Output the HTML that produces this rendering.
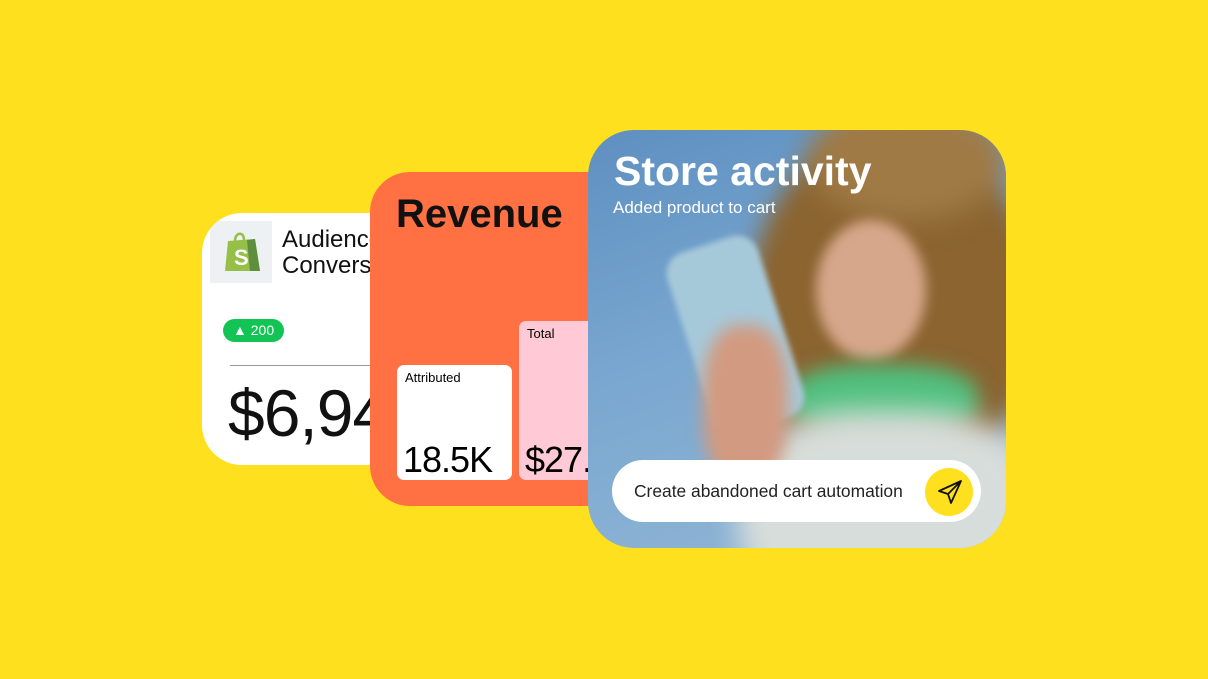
<!DOCTYPE html>
<html><head><style>
*{margin:0;padding:0;box-sizing:border-box}
body{width:1208px;height:679px;background:#FEE01F;position:relative;overflow:hidden;font-family:"Liberation Sans",sans-serif}
.a{position:absolute}
</style></head><body>
<div class="a" style="left:202px;top:213px;width:260px;height:252px;background:#fff;border-radius:40px;overflow:hidden">
  <div class="a" style="left:8px;top:8px;width:62px;height:62px;background:#EEF1F3"></div>
  <svg class="a" style="left:20px;top:16px" width="40" height="44" viewBox="0 0 40 44"><path d="M6 12 L33 10 L38 42 L3 42 Z" fill="#95BF47"/><path d="M25 11 L33 10 L38 42 L28 42 Z" fill="#5E8E3E"/><path d="M13 12 C13 3 22 2 22 11" stroke="#95BF47" stroke-width="2.5" fill="none"/><text x="12" y="36" font-size="22" font-weight="bold" fill="#fff" font-family="Liberation Sans">S</text></svg>
  <div class="a" style="left:80px;top:14px;font-size:24px;line-height:26px;color:#111">Audience<br>Conversions</div>
  <div class="a" style="left:21px;top:106px;width:61px;height:23px;background:#12C454;border-radius:12px;color:#fff;font-size:14px;line-height:23px;padding-left:10px">▲ 200</div>
  <div class="a" style="left:28px;top:152px;width:200px;height:1px;background:#999"></div>
  <div class="a" style="left:26px;top:162px;font-size:66px;color:#111;letter-spacing:-1px">$6,940</div>
</div>
<div class="a" style="left:370px;top:172px;width:260px;height:334px;background:#FF7143;border-radius:40px;overflow:hidden">
  <div class="a" style="left:26px;top:20px;font-size:40px;font-weight:bold;color:#111">Revenue</div>
  <div class="a" style="left:27px;top:193px;width:115px;height:115px;background:#fff;border-radius:7px">
    <div class="a" style="left:8px;top:5px;font-size:13px">Attributed</div>
    <div class="a" style="left:6px;top:74px;font-size:36px;letter-spacing:-1px">18.5K</div>
  </div>
  <div class="a" style="left:149px;top:149px;width:115px;height:159px;background:#FFC9D6;border-radius:7px">
    <div class="a" style="left:8px;top:5px;font-size:13px">Total</div>
    <div class="a" style="left:6px;top:118px;font-size:36px;letter-spacing:-1px">$27.4K</div>
  </div>
</div>
<div class="a" style="left:588px;top:130px;width:418px;height:418px;border-radius:46px;overflow:hidden;background:linear-gradient(160deg,#5E8FC0 0%,#79A7D0 45%,#95B8D6 100%)">
  <div class="a" style="left:160px;top:0px;width:290px;height:360px;border-radius:50%;background:#8B6430;filter:blur(12px)"></div>
  <div class="a" style="left:220px;top:-30px;width:200px;height:120px;border-radius:50%;background:#A07A45;filter:blur(14px)"></div>
  <div class="a" style="left:228px;top:90px;width:110px;height:140px;border-radius:50%;background:#D6A78B;filter:blur(6px)"></div>
  <div class="a" style="left:200px;top:235px;width:190px;height:70px;border-radius:40%;background:#4FC07E;filter:blur(10px)"></div>
  <div class="a" style="left:150px;top:280px;width:300px;height:200px;border-radius:40%;background:#D7DDDA;filter:blur(14px)"></div>
  <div class="a" style="left:100px;top:110px;width:95px;height:190px;border-radius:22px;background:#A6C9DA;transform:rotate(-18deg);filter:blur(3px)"></div>
  <div class="a" style="left:115px;top:195px;width:85px;height:160px;border-radius:40%;background:#D29A80;filter:blur(8px)"></div>
  <div class="a" style="left:26px;top:18px;font-size:41px;font-weight:bold;color:#fff">Store activity</div>
  <div class="a" style="left:25px;top:68px;font-size:17px;color:#fff">Added product to cart</div>
  <div class="a" style="left:24px;top:330px;width:369px;height:62px;background:#fff;border-radius:31px">
    <div class="a" style="left:22px;top:21px;font-size:17.4px;color:#222">Create abandoned cart automation</div>
    <div class="a" style="left:313px;top:8px;width:48px;height:48px;border-radius:50%;background:#FEE01F"></div>
    <svg class="a" style="left:324px;top:18px" width="28" height="28" viewBox="0 0 28 28"><path d="M3 13 L25 3 L15 25 L12 16 Z M12 16 L25 3" fill="none" stroke="#111" stroke-width="1.8" stroke-linejoin="round"/></svg>
  </div>
</div>
</body></html>
